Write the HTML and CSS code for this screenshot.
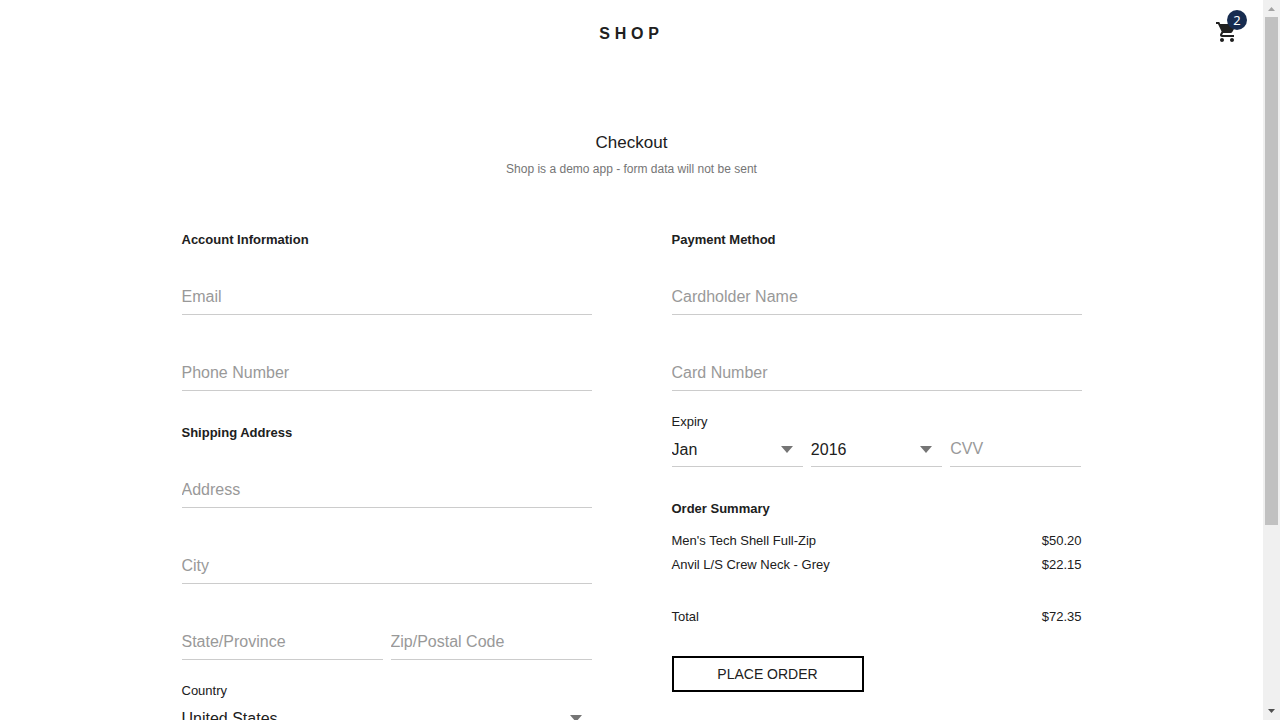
FILE: index.html
```html
<!DOCTYPE html>
<html lang="en">
<head>
<meta charset="utf-8">
<meta name="viewport" content="width=device-width, initial-scale=1">
<title>Checkout - SHOP</title>
<link rel="stylesheet" href="styles.css">
</head>
<body>
<div class="shell">
  <div class="page">
    <header class="header">
      <a class="logo" href="#">SHOP</a>
      <a class="cart" href="#" aria-label="Shopping cart: 2 items">
        <svg class="cart-icon" viewBox="0 0 24 24" aria-hidden="true"><path d="M7 18c-1.100 0-1.990.9-1.990 2S5.900 22 7 22s2-.9 2-2-.9-2-2-2zM1 2v2h2l3.600 7.590-1.350 2.450c-.16.280-.25.610-.25.960 0 1.100.9 2 2 2h12v-2H7.420c-.14 0-.25-.110-.25-.25l.03-.12.9-1.630h7.450c.750 0 1.410-.410 1.750-1.030l3.580-6.490c.080-.14.120-.310.120-.480 0-.550-.450-1-1-1H5.210l-.94-2H1zm16 16c-1.100 0-1.990.9-1.990 2s.89 2 1.990 2 2-.9 2-2-.9-2-2-2z"/></svg>
        <span class="badge">2</span>
      </a>
    </header>

    <main class="main">
      <div class="intro">
        <h1>Checkout</h1>
        <p>Shop is a demo app - form data will not be sent</p>
      </div>

      <form class="checkout">
        <div class="column">
          <section>
            <h2>Account Information</h2>
            <div class="fields">
              <input class="field" type="email" placeholder="Email" aria-label="Email">
              <input class="field" type="tel" placeholder="Phone Number" aria-label="Phone Number">
            </div>
          </section>
          <section>
            <h2>Shipping Address</h2>
            <div class="fields">
              <input class="field" type="text" placeholder="Address" aria-label="Address">
              <input class="field" type="text" placeholder="City" aria-label="City">
              <div class="row">
                <input class="field" type="text" placeholder="State/Province" aria-label="State/Province">
                <input class="field" type="text" placeholder="Zip/Postal Code" aria-label="Zip/Postal Code">
              </div>
            </div>
            <label class="caption" for="country">Country</label>
            <div class="select">
              <select id="country"><option>United States</option><option>Canada</option></select>
            </div>
          </section>
        </div>

        <div class="column">
          <section>
            <h2>Payment Method</h2>
            <div class="fields">
              <input class="field" type="text" placeholder="Cardholder Name" aria-label="Cardholder Name">
              <input class="field" type="text" placeholder="Card Number" aria-label="Card Number">
            </div>
            <label class="caption" for="month">Expiry</label>
            <div class="row">
              <div class="select">
                <select id="month"><option>Jan</option><option>Feb</option><option>Mar</option></select>
              </div>
              <div class="select">
                <select aria-label="Expiry year"><option>2016</option><option>2017</option><option>2018</option></select>
              </div>
              <input class="field" type="text" placeholder="CVV" aria-label="CVV">
            </div>
          </section>
          <section>
            <h2 class="summary-title">Order Summary</h2>
            <div class="line"><span>Men's Tech Shell Full-Zip</span><span>$50.20</span></div>
            <div class="line"><span>Anvil L/S Crew Neck - Grey</span><span>$22.15</span></div>
            <div class="line total"><span>Total</span><span>$72.35</span></div>
            <button class="submit" type="button">Place Order</button>
          </section>
        </div>
      </form>
    </main>
  </div>

  <div class="scrollbar" aria-hidden="true">
    <svg class="arrow arrow-up" viewBox="0 0 17 17"><path d="M5 11h7L8.500 7z"/></svg>
    <div class="track"><div class="thumb"></div></div>
    <svg class="arrow" viewBox="0 0 17 17"><path d="M5 6h7L8.500 10z"/></svg>
  </div>
</div>
</body>
</html>
```

FILE: styles.css
```css
* {
  box-sizing: border-box;
}

body {
  margin: 0;
  background: #fff;
  color: #202020;
  font: 13px/20px "Liberation Sans", Arial, sans-serif;
}

.shell {
  display: flex;
  height: 100vh;
}

.page {
  flex: 1;
  min-width: 0;
  overflow-y: auto;
  scrollbar-width: none;
}

.header {
  display: grid;
  grid-template-columns: 1fr auto 1fr;
  align-items: center;
  height: 64px;
  padding: 0 16px;
}

.logo {
  grid-column: 2;
  padding-top: 4px;
  color: #202020;
  font-size: 16px;
  font-weight: bold;
  letter-spacing: 0.3em;
  text-decoration: none;
}

.cart {
  position: relative;
  justify-self: end;
  width: 40px;
  height: 40px;
  padding: 8px;
}

.cart-icon {
  display: block;
  width: 24px;
  height: 24px;
  fill: #202020;
}

.badge {
  position: absolute;
  top: -2px;
  right: 0;
  width: 20px;
  height: 20px;
  border-radius: 50%;
  background: #172c50;
  color: #fff;
  font-family: "Noto Sans", sans-serif;
  font-size: 13px;
  text-align: center;
}

.intro {
  padding: 69px 16px 50px;
  text-align: center;
}

h1 {
  margin: 0 0 6px;
  font-size: 17px;
  font-weight: normal;
}

.intro p {
  margin: 0;
  color: #757575;
  font-size: 12px;
}

.checkout {
  display: flex;
  gap: 80px;
  max-width: 900px;
  margin: 0 auto;
  padding-bottom: 280px;
}

.column {
  display: flex;
  flex: 1;
  flex-direction: column;
  gap: 31px;
  min-width: 0;
}

h2 {
  margin: 0 0 28px;
  font-size: 13px;
  font-weight: bold;
  line-height: 22px;
}

.summary-title {
  margin-bottom: 9px;
}

.fields {
  display: grid;
  gap: 40px;
}

.row {
  display: flex;
  gap: 8px;
}

.row > * {
  flex: 1;
  min-width: 0;
}

.field,
.select select {
  width: 100%;
  height: 36px;
  margin: 0;
  padding: 0;
  border: 0;
  border-bottom: 1px solid #ccc;
  border-radius: 0;
  outline: 0;
  background: transparent;
  color: #202020;
  font: 16px "Liberation Sans", Arial, sans-serif;
  appearance: none;
}

.field::placeholder {
  color: #999;
  opacity: 1;
}

.caption {
  display: block;
  margin-top: 22px;
  line-height: 18px;
}

.select {
  position: relative;
}

.select select {
  display: block;
  padding-top: 1px;
}

.select::after {
  position: absolute;
  top: 15px;
  right: 10px;
  border: 6px solid transparent;
  border-top: 7px solid #757575;
  border-bottom: 0;
  content: "";
  pointer-events: none;
}

.line {
  display: flex;
  justify-content: space-between;
  line-height: 24px;
}

.total {
  margin: 28px 0 27px;
}

.submit {
  width: 192px;
  height: 36px;
  padding: 0;
  border: 2px solid #000;
  background: #fff;
  color: #202020;
  font: 14px "Liberation Sans", Arial, sans-serif;
  text-transform: uppercase;
}

.scrollbar {
  display: flex;
  flex-direction: column;
  width: 17px;
  background: #f0f0f0;
}

.track {
  flex: 1;
  padding: 0 2px;
}

.thumb {
  height: 74%;
  background: #c1c1c1;
}

.arrow {
  display: block;
  width: 17px;
  height: 17px;
  fill: #505050;
}

.arrow-up {
  fill: #a3a3a3;
}
```
